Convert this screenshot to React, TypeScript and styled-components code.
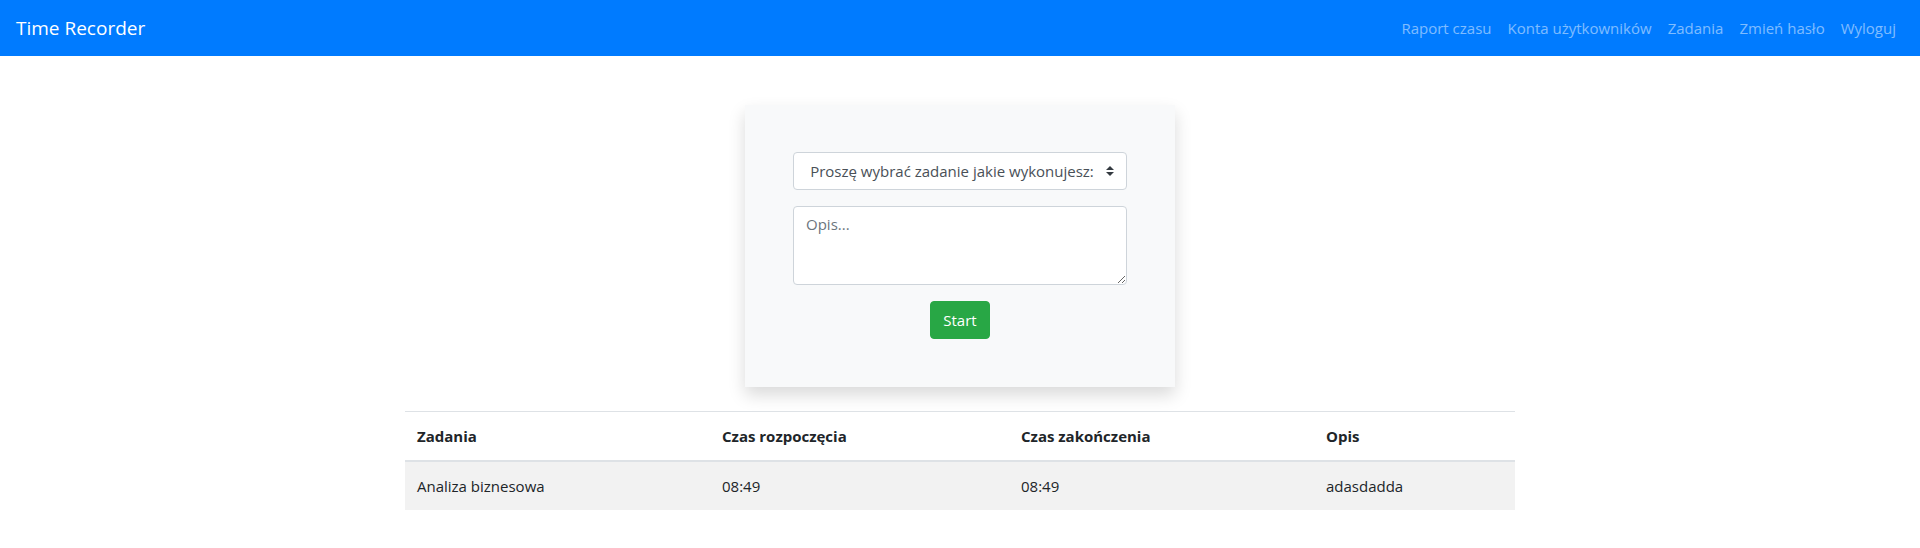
import React from "react";
import styled, { createGlobalStyle } from "styled-components";

const GlobalStyle = createGlobalStyle`
  *, *::before, *::after { box-sizing: border-box; }
  body {
    margin: 0;
    font-family: "Open Sans", "Noto Sans", sans-serif;
    font-size: 16px;
    line-height: 1.5;
    color: #212529;
    background: #fff;
  }
`;

const Navbar = styled.nav`
  display: flex;
  align-items: center;
  justify-content: space-between;
  height: 56px;
  padding: 8px 16px;
  background: #007bff;
`;

const Brand = styled.a`
  font-size: 19px;
  line-height: 30px;
  padding: 5px 0;
  color: #fff;
  text-decoration: none;
`;

const NavList = styled.ul`
  display: flex;
  list-style: none;
  margin: 0;
  padding: 0;
`;

const NavLink = styled.a`
  display: block;
  padding: 8px;
  font-size: 15px;
  line-height: 24px;
  color: rgba(255, 255, 255, 0.5);
  text-decoration: none;
`;

const Container = styled.main`
  width: 1140px;
  margin: 0 auto;
  padding: 49px 15px 0;
`;

const Card = styled.form`
  width: 430px;
  margin: 0 auto;
  padding: 47px 48px 48px;
  background: #f8f9fa;
  box-shadow: 0 8px 16px rgba(0, 0, 0, 0.15);
  display: flex;
  flex-direction: column;
  gap: 16px;
  align-items: center;
`;

const Select = styled.select`
  appearance: none;
  width: 100%;
  height: 38px;
  padding: 6px 28px 6px 12px;
  font: inherit;
  font-size: 15px;
  color: #495057;
  text-align: center;
  text-align-last: center;
  background: #fff url("data:image/svg+xml,%3csvg xmlns='http://www.w3.org/2000/svg' width='4' height='5' viewBox='0 0 4 5'%3e%3cpath fill='%23343a40' d='M2 0L0 2h4zm0 5L0 3h4z'/%3e%3c/svg%3e") no-repeat right 12px center / 8px 10px;
  border: 1px solid #ced4da;
  border-radius: 4px;
`;

const TextArea = styled.textarea`
  width: 100%;
  height: 79px;
  padding: 6px 12px;
  font: inherit;
  font-size: 15px;
  color: #495057;
  background: #fff;
  border: 1px solid #ced4da;
  border-radius: 4px;
  resize: vertical;
  &::placeholder { color: #6c757d; opacity: 1; }
`;

const Button = styled.button`
  height: 38px;
  padding: 6px 12px;
  font: inherit;
  font-size: 15px;
  color: #fff;
  background: #28a745;
  border: 1px solid #28a745;
  border-radius: 4px;
`;

const Table = styled.table`
  width: 100%;
  margin-top: 24px;
  border-collapse: collapse;
  table-layout: fixed;
  color: #212529;
  font-size: 15px;
`;

const Th = styled.th<{ $w: number }>`
  width: ${(p) => p.$w}px;
  padding: 12px;
  line-height: 24px;
  text-align: left;
  font-weight: 700;
  border-top: 1px solid #dee2e6;
  border-bottom: 2px solid #dee2e6;
`;

const Row = styled.tr<{ $striped?: boolean }>`
  background: ${(p) => (p.$striped ? "rgba(0, 0, 0, 0.05)" : "transparent")};
`;

const Td = styled.td`
  padding: 12px;
  line-height: 24px;
`;

const links = ["Raport czasu", "Konta użytkowników", "Zadania", "Zmień hasło", "Wyloguj"];

export default function App() {
  return (
    <>
      <GlobalStyle />
      <Navbar>
        <Brand href="#">Time Recorder</Brand>
        <NavList>
          {links.map((l) => (
            <li key={l}>
              <NavLink href="#">{l}</NavLink>
            </li>
          ))}
        </NavList>
      </Navbar>
      <Container>
        <Card onSubmit={(e) => e.preventDefault()}>
          <Select defaultValue="">
            <option value="">Proszę wybrać zadanie jakie wykonujesz:</option>
          </Select>
          <TextArea placeholder="Opis..." />
          <Button type="submit">Start</Button>
        </Card>
        <Table>
          <thead>
            <tr>
              <Th $w={305}>Zadania</Th>
              <Th $w={299}>Czas rozpoczęcia</Th>
              <Th $w={305}>Czas zakończenia</Th>
              <Th $w={201}>Opis</Th>
            </tr>
          </thead>
          <tbody>
            <Row $striped>
              <Td>Analiza biznesowa</Td>
              <Td>08:49</Td>
              <Td>08:49</Td>
              <Td>adasdadda</Td>
            </Row>
          </tbody>
        </Table>
      </Container>
    </>
  );
}
